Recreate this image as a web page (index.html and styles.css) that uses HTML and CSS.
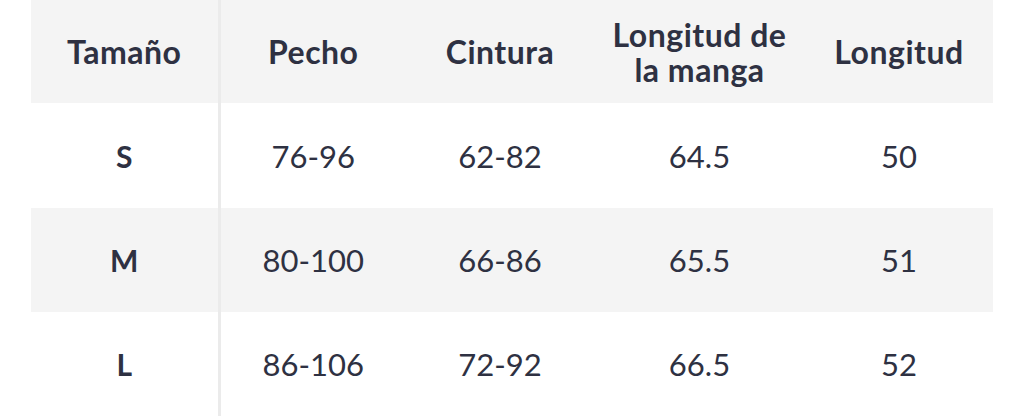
FILE: index.html
```html
<!DOCTYPE html>
<html lang="es">
<head>
<meta charset="utf-8">
<title>Tabla de tallas</title>
<link rel="stylesheet" href="styles.css">
</head>
<body>
<table class="size-table">
  <colgroup>
    <col class="c1"><col class="c2"><col class="c3"><col class="c4"><col class="c5">
  </colgroup>
  <thead>
    <tr class="head">
      <th class="first">Tamaño</th>
      <th>Pecho</th>
      <th>Cintura</th>
      <th>Longitud de<br>la manga</th>
      <th>Longitud</th>
    </tr>
  </thead>
  <tbody>
    <tr class="row">
      <td class="first size">S</td><td>76-96</td><td>62-82</td><td>64.5</td><td>50</td>
    </tr>
    <tr class="row alt">
      <td class="first size">M</td><td>80-100</td><td>66-86</td><td>65.5</td><td>51</td>
    </tr>
    <tr class="row">
      <td class="first size">L</td><td>86-106</td><td>72-92</td><td>66.5</td><td>52</td>
    </tr>
  </tbody>
</table>
</body>
</html>
```
FILE: styles.css
```css
html, body {
  margin: 0;
  padding: 0;
  background: #ffffff;
}
body {
  padding-left: 31px;
  font-family: Lato, "Noto Sans", sans-serif;
  color: #2e3142;
}
.size-table {
  border-collapse: collapse;
  table-layout: fixed;
  width: 962px;
}
.c1 { width: 188px; }
.c2 { width: 187px; }
.c3 { width: 188px; }
.c4 { width: 211px; }
.c5 { width: 188px; }
.size-table th,
.size-table td {
  padding: 0;
  text-align: center;
  vertical-align: middle;
}
.head {
  background: #f4f4f4;
  height: 103px;
}
.head th {
  font-weight: 700;
  font-size: 32px;
  line-height: 35px;
  letter-spacing: 0.5px;
}
.row { height: 104px; }
.row td {
  font-size: 31px;
  font-weight: 400;
}
.row:first-child { height: 105px; }
.alt { background: #f4f4f4; }
.size-table .first {
  border-right: 3px solid #ebebeb;
}
.size-table td.size {
  font-weight: 700;
  font-size: 30px;
}
```
